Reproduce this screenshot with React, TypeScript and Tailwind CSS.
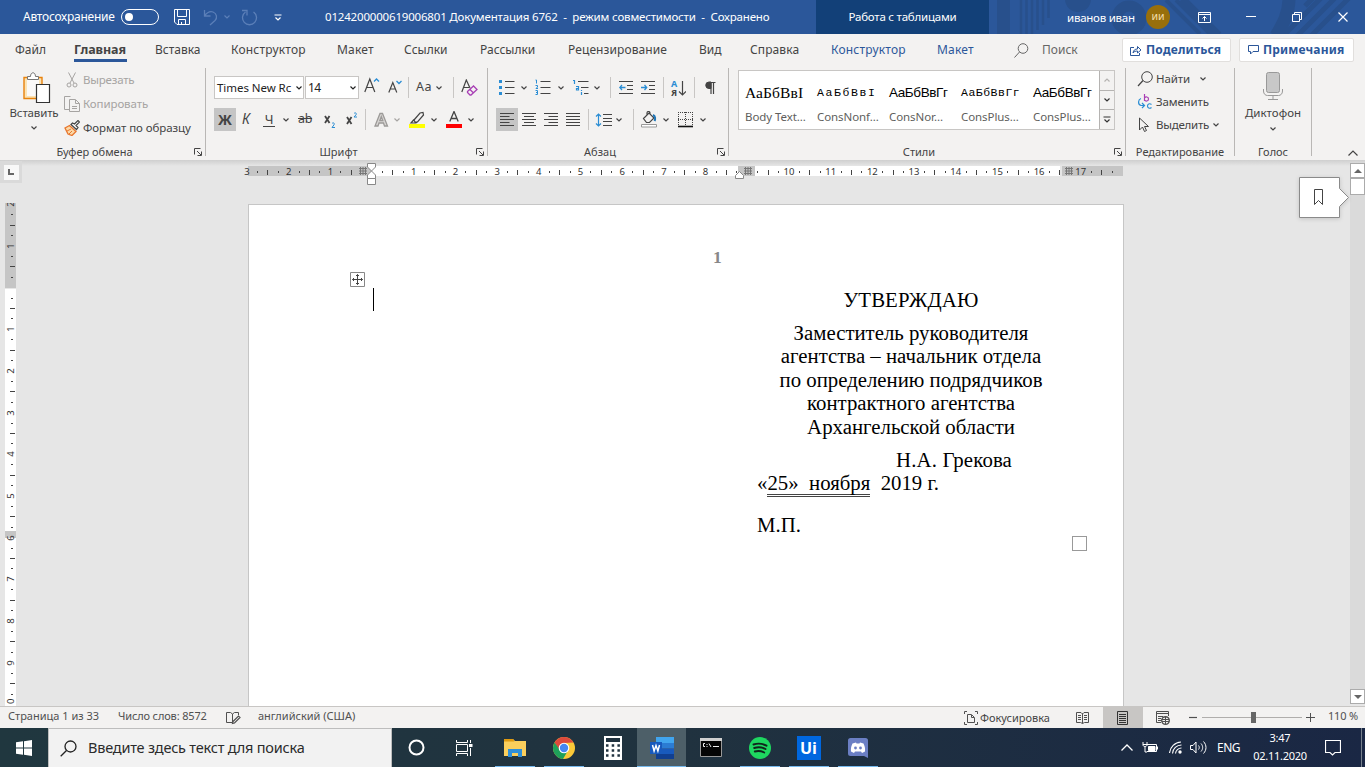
import type { ReactNode } from 'react';

type SvgProps = { w: number; h: number; className?: string; children: ReactNode };

function Svg({ w, h, className = '', children }: SvgProps) {
  return (
    <svg
      width={w}
      height={h}
      viewBox={`0 0 ${w} ${h}`}
      fill="none"
      stroke="currentColor"
      strokeWidth={1}
      className={`block shrink-0 ${className}`}
    >
      {children}
    </svg>
  );
}

function Chevron({ className = '' }: { className?: string }) {
  return (
    <Svg w={6} h={4} className={className}>
      <path d="M.5.5 3 3 5.5.5" strokeWidth={1.2} />
    </Svg>
  );
}

function Sep({ className = '' }: { className?: string }) {
  return <div className={`h-[21px] w-px shrink-0 bg-[#c8c6c4] ${className}`} />;
}

function Launcher({ className = '' }: { className?: string }) {
  return (
    <Svg w={8} h={8} className={className}>
      <path d="M.5 6.5v-6h6M3 3l4 4M7.500 3.500v4h-4" />
    </Svg>
  );
}

function Lines({ rows }: { rows: [number, number][] }) {
  return (
    <Svg w={14} h={14}>
      {rows.map(([a, b], i) => (
        <path key={i} d={`M${a} ${i * 3 + 0.5}H${b}`} />
      ))}
    </Svg>
  );
}

function Label({ children, className = '' }: { children: ReactNode; className?: string }) {
  return <span className={`block shrink-0 whitespace-nowrap ${className}`}>{children}</span>;
}

function TitleBar() {
  return (
    <header className="relative flex h-[34px] items-center bg-[#2b579a] text-[11.5px] text-white">
      <svg className="absolute right-0 top-0" width="376" height="34" viewBox="0 0 376 34" fill="none" stroke="#28508c">
        <path d="M14.500 0v34" strokeWidth="13" />
        <path d="M32 0v34M37.500 0v34M43 0v34M48.500 0v30M54 0v25M59.500 0v18" strokeWidth="2.500" />
        <circle cx="89" cy="-1" r="13" fill="#28508c" stroke="none" />
        <circle cx="140" cy="18" r="12" strokeWidth="11" />
        <path d="M177 0l34 34M187 0l34 34M197 0l34 34" strokeWidth="4" />
        <path d="M192 0l36 36" strokeWidth="9" />
        <path d="M300-2c0 16-6 26-13 38" strokeWidth="13" />
        <path d="M294 36 334-4M308 36 348-4M322 36 362-4M316 6 328-6" strokeWidth="5" />
      </svg>
      <Label className="ml-[23px] w-[98px] text-[12px] tracking-[-0.25px]">Автосохранение</Label>
      <div className="flex h-[16px] w-[38px] shrink-0 items-center rounded-full border border-white px-[3px]">
        <div className="size-[8px] rounded-full bg-white" />
      </div>
      <Svg w={16} h={16} className="ml-[15px]">
        <path d="M.5.5h15v15H3l-2.500-2.500zM3.500 1v6.500h9V1M4.500 15v-4.500h7V15M7.500 13v2" />
      </Svg>
      <Svg w={16} h={17} className="ml-[13px] text-[#5b7fb8]">
        <path d="M1.500 1v6h6M1.500 7C4 3.500 7 2 10 3c4 1.500 4.500 6 2 8.500L7 16" strokeWidth={1.300} />
      </Svg>
      <Chevron className="ml-[5px] text-[#5b7fb8]" />
      <Svg w={17} h={17} className="ml-[11px] text-[#5b7fb8]">
        <path d="M4.500 3A7 7 0 1 0 12.500 3M1 1.500h5v5" strokeWidth={1.300} />
      </Svg>
      <Svg w={8} h={7} className="ml-[16px]">
        <path d="M.5 1h7M1.500 3.500 4 6l2.500-2.500" strokeWidth={1.200} />
      </Svg>
      <Label className="ml-[43px] w-[491px] whitespace-pre text-[11.500px] tracking-[-0.180px]">
        {'0124200000619006801 Документация 6762  -  режим совместимости  -  Сохранено'}
      </Label>
      <div className="flex h-full w-[173px] shrink-0 items-center justify-center bg-[#124078] tracking-[-0.23px]">Работа с таблицами</div>
      <Label className="relative ml-[78px] mt-[2px] w-[79px] tracking-[-0.25px]">иванов иван</Label>
      <div className="relative flex size-[24px] shrink-0 items-center justify-center rounded-full bg-[#986f0b] text-[10.500px] text-[#f3dfae]">ии</div>
      <Svg w={14} h={11} className="relative ml-[28px]">
        <path d="M.5.5h12v10H.5zM.5 2.500h12M6.500 9V4.500M4.500 6.500l2-2 2 2" />
      </Svg>
      <Svg w={10} h={10} className="relative ml-[34px]"><path d="M0 4.500h10" /></Svg>
      <Svg w={10} h={10} className="relative ml-[36px]"><path d="M.5 2.500h7v7h-7zM2.500 2V.5h7v7H8" /></Svg>
      <Svg w={10} h={10} className="relative ml-[36px]"><path d="m.5.5 9 9m0-9-9 9" strokeWidth={1.200} /></Svg>
    </header>
  );
}

function Tabs() {
  return (
    <nav className="flex h-[32px] items-center text-[12px] text-[#444]">
      <Label className="ml-[15px] w-[59px]">Файл</Label>
      <Label className="w-[53px] border-b-[3px] border-[#2b579a] pt-[3px] text-[12.500px] font-bold leading-[18px] tracking-[-0.1px]">Главная</Label>
      <Label className="ml-[28px] w-[76px]">Вставка</Label>
      <Label className="w-[106px] tracking-[0.2px]">Конструктор</Label>
      <Label className="w-[67px] tracking-[0.2px]">Макет</Label>
      <Label className="w-[76px]">Ссылки</Label>
      <Label className="w-[88px]">Рассылки</Label>
      <Label className="w-[131px] tracking-[0.1px]">Рецензирование</Label>
      <Label className="w-[51px]">Вид</Label>
      <Label className="w-[81px] tracking-[0.1px]">Справка</Label>
      <Label className="w-[106px] tracking-[0.2px] text-[#2b579a]">Конструктор</Label>
      <Label className="w-[77px] tracking-[0.2px] text-[#2b579a]">Макет</Label>
      <Svg w={15} h={15} className="text-[#666]"><circle cx="9" cy="5.500" r="4.800" /><path d="M5.500 9 .5 14.500" /></Svg>
      <Label className="ml-[13px] w-[80px] text-[#666]">Поиск</Label>
      <button className="flex h-[24px] w-[109px] shrink-0 items-center whitespace-nowrap rounded-[2px] border border-[#e1dfdd] bg-white pl-[7px] font-bold text-[#2b579a]">
        <Svg w={12} h={11}><path d="M4 2.500H.5v8h9V8M3 8c.5-3 2-4 4.500-4V1.500L11 5 7.500 8V6C5.500 6 4 6.500 3 8z" /></Svg>
        <span className="ml-[4px] tracking-[0.2px]">Поделиться</span>
      </button>
      <button className="ml-[8px] flex h-[24px] w-[115px] shrink-0 items-center whitespace-nowrap rounded-[2px] border border-[#e1dfdd] bg-white pl-[8px] font-bold text-[#2b579a]">
        <Svg w={11} h={10}><path d="M.5.5h10v6H5L2.500 9V6.500h-2z" /></Svg>
        <span className="ml-[4px] tracking-[0.15px]">Примечания</span>
      </button>
    </nav>
  );
}

function Group({ width, caption, launcher, children }: { width: string; caption: string; launcher?: boolean; children: ReactNode }) {
  return (
    <section className={`flex h-[88px] shrink-0 flex-col border-r border-[#b9b7b5] ${width}`}>
      <div className="h-[78px] shrink-0">{children}</div>
      <div className="flex h-[12px] shrink-0 items-center text-[11px] leading-[12px] text-[#444]">
        <span className={`flex-1 whitespace-nowrap text-center ${launcher ? 'pr-[5px]' : ''}`}>{caption}</span>
        {launcher && <Launcher className="mr-[3px]" />}
      </div>
    </section>
  );
}

function Clipboard() {
  return (
    <Group width="w-[206px]" caption="Буфер обмена" launcher>
      <div className="flex">
        <div className="flex w-[64px] flex-col items-center pl-[4px] pt-[4px]">
          <Svg w={29} h={32} className="mr-[-4px]">
            <path d="M2 5.500h18v21H2z" fill="#fbe3b4" stroke="#e8820c" strokeWidth={1.400} />
            <path d="M5 7h12v17H5z" fill="#faf9f8" stroke="none" />
            <path d="M5.500 7.500V4.500h3c0-5 5-5 5 0h3v3z" fill="#fff" stroke="#777" />
            <path d="M14.500 12.500h13v18h-13z" fill="#fff" stroke="#333" strokeWidth={1.200} />
          </Svg>
          <Label className="mt-px text-[11.500px] leading-[15px] tracking-[-0.15px]">Вставить</Label>
          <Chevron className="mt-[6px]" />
        </div>
        <div className="flex flex-col text-[11.500px]">
          <div className="flex h-[24px] items-center text-[#a6a4a2]">
            <Svg w={16} h={16}><path d="M4.500.5 10 11M11.500.5 6 11" /><circle cx="5" cy="13" r="2" /><circle cx="11" cy="13" r="2" /></Svg>
            <Label className="ml-[3px] tracking-[-0.2px]">Вырезать</Label>
          </div>
          <div className="flex h-[24px] items-center text-[#a6a4a2]">
            <Svg w={16} h={16}><path d="M5 13.500H.5V.5h6M5.500 3.500h6l4 4v8h-10zM11.500 4v3.500h4M8 10.500h5M8 12.500h5" /></Svg>
            <Label className="ml-[3px] tracking-[-0.1px]">Копировать</Label>
          </div>
          <div className="flex h-[24px] items-center text-[#444]">
            <Svg w={16} h={16}>
              <path d="M5.500 5.500 1 8l3 6 4 1.500 4-4z" fill="#fbd9a8" stroke="#e8762d" strokeWidth={1.300} />
              <path d="M3 11l4-2M5 14l3-3" stroke="#e8762d" />
              <path d="m7 4.500 5.500 5 1.500-2-2-2L15.500 2 14 .5 10.500 4l-2-1z" fill="#fff" strokeWidth={1.200} />
            </Svg>
            <Label className="ml-[3px] tracking-[-0.07px]">Формат по образцу</Label>
          </div>
        </div>
      </div>
    </Group>
  );
}

function FontGroup() {
  return (
    <Group width="w-[282px]" caption="Шрифт" launcher>
      <div className="pl-[8px] pt-[8px]">
        <div className="flex h-[23px] items-center">
          <div className="flex h-[23px] w-[90px] shrink-0 items-center border border-[#c8c6c4] bg-white pl-[2px] text-[11.500px] text-[#222]">
            <span className="w-[74px] whitespace-nowrap tracking-[-0.05px]">Times New Rc</span>
            <Chevron className="ml-[5px]" />
          </div>
          <div className="ml-px flex h-[23px] w-[54px] shrink-0 items-center border border-[#c8c6c4] bg-white pl-[2px] text-[12px] text-[#222]">
            <span className="w-[42px] tracking-[-0.5px]">14</span>
            <Chevron />
          </div>
          <Svg w={16} h={16} className="mb-[5px] ml-[5px]">
            <path d="m.8 15 5-13 5 13M2.500 10.500h6.500" strokeWidth={1.200} />
            <path d="m10 4.500 2.500-2.500L15 4.500" stroke="#2a8dd4" strokeWidth={1.300} />
          </Svg>
          <Svg w={14} h={14} className="mb-[2px] ml-[8px]">
            <path d="m.8 12.500 4-10 4 10M2.200 9h5.200" strokeWidth={1.200} />
            <path d="m8.500 1 2.500 2.500L13.500 1" stroke="#2a8dd4" strokeWidth={1.300} />
          </Svg>
          <Sep className="ml-[6px]" />
          <Label className="ml-[7px] w-[18px] text-[12.500px] tracking-[0.5px]">Aa</Label>
          <Chevron className="ml-[2px]" />
          <Sep className="ml-[11px]" />
          <Svg w={17} h={17} className="ml-[7px]">
            <path d="m.8 13 4.500-12L9 9M2.500 8.500h5.500" strokeWidth={1.200} />
            <path d="m6.500 12.500 6-5.500 3.500 3.500-6 5.500H9l-2.500-2.500zM9 10.500l3.500 3.500" stroke="#a83fb5" strokeWidth={1.300} />
          </Svg>
        </div>
        <div className="mt-[9px] flex h-[23px] items-center">
          <div className="flex h-[23px] w-[22px] shrink-0 items-center justify-center bg-[#c5c5c5] pb-px text-[14px] font-bold">Ж</div>
          <Label className="mb-[2px] ml-[6px] w-[10px] text-[14px] italic">К</Label>
          <Label className="ml-[11px] w-[12px] border-b border-[#444] text-center text-[13px] leading-[13px]">Ч</Label>
          <Chevron className="ml-[8px]" />
          <Label className="ml-[9px] w-[16px] text-[12.500px] tracking-[-0.300px] line-through">ab</Label>
          <Svg w={12} h={16} className="ml-[10px]">
            <path d="m1 4 4.500 7M5.500 4 1 11" strokeWidth={1.800} />
            <path d="M8 11.500c1.500-1.500 3 0 2 1.300L8 15.500h3" stroke="#2a8dd4" />
          </Svg>
          <Svg w={12} h={16} className="ml-[10px]">
            <path d="m1 5 4.500 7M5.500 5 1 12" strokeWidth={1.800} />
            <path d="M8 1.500c1.500-1.500 3 0 2 1.300L8 5h3" stroke="#2a8dd4" />
          </Svg>
          <Sep className="ml-[7px]" />
          <Svg w={16} h={16} className="ml-[8px] text-[#9c9a98]">
            <path d="M6 1.500h2.500L13.500 14H10.500L9.500 11H5L4 14H1zM5.800 8.500h3L7.300 4.500z" fill="#d8d6d4" strokeWidth={1.300} />
          </Svg>
          <Chevron className="ml-[4px] text-[#a6a4a2]" />
          <Svg w={16} h={17} className="ml-[9px]">
            <path d="m5 9 6-7 3-.5.5 2.500-6 7H6zM5 8.500l-3 3.500h5l1-1" strokeWidth={1.200} />
            <path d="M0 15h16" stroke="#ff0" strokeWidth={4} />
          </Svg>
          <Chevron className="ml-[6px]" />
          <Svg w={16} h={17} className="ml-[9px]">
            <path d="M3.800 10.500 8 .5l4.200 10M5.200 7.500h5.600" strokeWidth={1.300} />
            <path d="M0 15h16" stroke="#f00" strokeWidth={4} />
          </Svg>
          <Chevron className="ml-[6px]" />
        </div>
      </div>
    </Group>
  );
}

function Paragraph() {
  return (
    <Group width="w-[241px]" caption="Абзац" launcher>
      <div className="pl-[8px] pt-[8px]">
        <div className="flex h-[23px] items-center">
          <Svg w={16} h={16} className="ml-[3px]">
            <path d="M0 1.500h3M0 7.500h3M0 13.500h3" stroke="#2a8dd4" strokeWidth={3} />
            <path d="M6 1.500h9.500M6 7.500h9.500M6 13.500h9.500" />
          </Svg>
          <Chevron className="ml-[6px]" />
          <Svg w={16} h={17} className="ml-[8px]">
            <path d="M.5 1h1v3.500M.5 6.500h2V8L1 9.500h2M.5 11.500h2v4h-2M1 13.500h1" stroke="#2a8dd4" />
            <path d="M5.500 2.500h10M5.500 8.500h10M5.500 14.500h10" />
          </Svg>
          <Chevron className="ml-[7px]" />
          <Svg w={16} h={17} className="ml-[9px]">
            <path d="M0 1.500h1.500V5M3 7.500h2.500V11H3.500V9.500h2M8.500 13v3M8.500 11v1" stroke="#2a8dd4" strokeWidth={1.200} />
            <path d="M5 2.500h10.500M8 8.500h7.500M11 14.500h4.500" />
          </Svg>
          <Chevron className="ml-[5px]" />
          <Sep className="ml-[10px]" />
          <Svg w={14} h={14} className="ml-[8px]">
            <path d="M0 .5h14M8 4.500h6M8 8.500h6M0 12.500h14" />
            <path d="M6.500 6.500H1M3 4 .8 6.500 3 9" stroke="#2a8dd4" strokeWidth={1.300} />
          </Svg>
          <Svg w={14} h={14} className="ml-[8px]">
            <path d="M0 .5h14M8 4.500h6M8 8.500h6M0 12.500h14" />
            <path d="M0 6.500h5.500M3.500 4l2.200 2.500L3.500 9" stroke="#2a8dd4" strokeWidth={1.300} />
          </Svg>
          <Sep className="ml-[8px]" />
          <div className="ml-[7px] flex w-[16px] shrink-0 items-center">
            <div className="flex flex-col text-[9px] font-bold leading-[9px]">
              <span className="block h-[9px] text-[#2a8dd4]">А</span>
              <span className="block h-[9px]">Я</span>
            </div>
            <Svg w={8} h={16} className="ml-px"><path d="M4.500 1v14M1 11.500 4.500 15 8 11.500" strokeWidth={1.200} /></Svg>
          </div>
          <Sep className="ml-[7px]" />
          <Svg w={11} h={14} className="ml-[10px]">
            <path d="M8.500 13V1M6 13V1M10.500 1.500H4" strokeWidth={1.200} />
            <path d="M6 1H4a3 3 0 0 0 0 6.500h2z" fill="currentColor" />
          </Svg>
        </div>
        <div className="mt-[9px] flex h-[23px] items-center">
          <div className="flex h-[23px] w-[22px] shrink-0 items-center justify-center bg-[#c5c5c5]">
            <Lines rows={[[0, 14], [0, 9.500], [0, 14], [0, 9.500], [0, 14]]} />
          </div>
          <div className="ml-[4px]"><Lines rows={[[0, 14], [2, 12], [0, 14], [2, 12], [0, 14]]} /></div>
          <div className="ml-[8px]"><Lines rows={[[0, 14], [4.500, 14], [0, 14], [4.500, 14], [0, 14]]} /></div>
          <div className="ml-[8px]"><Lines rows={[[0, 14], [0, 14], [0, 14], [0, 14], [0, 14]]} /></div>
          <Sep className="ml-[8px]" />
          <Svg w={17} h={14} className="ml-[6px]">
            <path d="M3.500 1v12M1 3.500 3.500 1 6 3.500M1 10.500 3.500 13 6 10.500" stroke="#2a8dd4" strokeWidth={1.200} />
            <path d="M8 1.500h9M8 5.500h9M8 8.500h9M8 12.500h9" />
          </Svg>
          <Chevron className="ml-[4px]" />
          <Sep className="ml-[11px]" />
          <Svg w={16} h={17} className="ml-[7px]">
            <path d="m2.500 7.500 5.500-5.500 5 5-4.500 4.500H5.500zM6 4V2c0-2 3-2 3 0v2" strokeWidth={1.200} />
            <path d="M12 4c2.500 1 2.500 4 1.500 6" stroke="#1f77b8" strokeWidth={2} />
            <path d="M.5 13.500h15v2.500H.5z" fill="#fff" stroke="#999" />
          </Svg>
          <Chevron className="ml-[6px]" />
          <Svg w={16} h={16} className="ml-[9px]">
            <path d="M.5 0v14M14.500 0v14M7.500 0v14M0 .5h15M0 7.500h15" strokeDasharray="1 1" />
            <path d="M0 14.500h15" strokeWidth={1.600} stroke="#111" />
          </Svg>
          <Chevron className="ml-[6px]" />
        </div>
      </div>
    </Group>
  );
}

const STYLES = [
  { sample: 'АаБбВвІ', name: 'Body Text...', font: 'font-["Liberation_Serif",serif] text-[15.5px] tracking-[0.1px]' },
  { sample: 'АаБбВвІ', name: 'ConsNonf...', font: 'font-["Liberation_Mono",monospace] text-[11.5px] tracking-[1.6px]' },
  { sample: 'АаБбВвГг', name: 'ConsNor...', font: 'font-["Liberation_Sans",sans-serif] text-[13.5px] tracking-[-0.4px]' },
  { sample: 'АаБбВвГг', name: 'ConsPlus...', font: 'font-["Liberation_Mono",monospace] text-[11.5px] tracking-[0.5px]' },
  { sample: 'АаБбВвГг', name: 'ConsPlus...', font: 'font-["Liberation_Sans",sans-serif] text-[13.5px] tracking-[-0.4px]' },
];

function Styles() {
  return (
    <Group width="w-[397px]" caption="Стили" launcher>
      <div className="pl-[9px] pt-[2px]">
        <div className="flex h-[60px] w-[377px] border border-[#c8c6c4] bg-white">
          {STYLES.map((s, i) => (
            <div key={i} className="w-[72px] shrink-0 pl-[6px] pt-[12px]">
              <span className={`block h-[20px] w-[60px] whitespace-nowrap leading-[20px] text-black ${s.font}`}>{s.sample}</span>
              <span className="mt-[6px] block whitespace-nowrap text-[11.500px] leading-[16px] tracking-[-0.08px] text-[#605e5c]">{s.name}</span>
            </div>
          ))}
          <div className="ml-auto flex w-[15px] shrink-0 flex-col border-l border-[#b5b3b1]">
            <div className="flex flex-1 items-center justify-center bg-[#f3f2f1] text-[#b5b3b1]"><Chevron className="rotate-180" /></div>
            <div className="flex flex-1 items-center justify-center border-y border-[#b5b3b1] bg-[#f3f2f1] text-[#333]"><Chevron /></div>
            <div className="flex flex-1 items-center justify-center bg-[#f3f2f1] text-[#333]">
              <Svg w={8} h={7}><path d="M.5 1h7M1.500 3.500 4 6l2.500-2.500" strokeWidth={1.200} /></Svg>
            </div>
          </div>
        </div>
      </div>
    </Group>
  );
}

function Editing() {
  return (
    <Group width="w-[109px]" caption="Редактирование">
      <div className="flex flex-col pl-[11px] text-[11.500px]">
        <div className="flex h-[22px] items-center">
          <Svg w={16} h={16}><circle cx="10" cy="6" r="5.300" /><path d="m6 9.500-5 5.500" strokeWidth={1.200} /></Svg>
          <Label className="ml-[3px] w-[44px] tracking-[-0.1px]">Найти</Label>
          <Chevron />
        </div>
        <div className="flex h-[24px] items-center">
          <Svg w={16} h={16}>
            <path d="M7.500 0v7M7.500 4c1-1.500 4-1.500 4 1s-3 2.500-4 1" stroke="#a83fb5" strokeWidth={1.200} />
            <path d="M14.500 10.500c-2-1.500-4-.5-4 1.500s2 3 4 1.500M4 4.500c-3 1-3.500 6 0 7h3M5 9l2.500 2.500L5 14" stroke="#2a8dd4" strokeWidth={1.200} />
          </Svg>
          <Label className="ml-[3px] tracking-[-0.15px]">Заменить</Label>
        </div>
        <div className="flex h-[22px] items-center">
          <Svg w={16} h={16}><path d="M2.500 1v12l3-3 2 4.500 2-1L7.500 9.500h4z" /></Svg>
          <Label className="ml-[3px] w-[57px] tracking-[-0.25px]">Выделить</Label>
          <Chevron />
        </div>
      </div>
    </Group>
  );
}

function Ribbon() {
  return (
    <div className="flex h-[94px] pt-[2px] text-[#444]">
      <Clipboard />
      <FontGroup />
      <Paragraph />
      <Styles />
      <Editing />
      <Group width="w-[77px]" caption="Голос">
        <div className="flex flex-col items-center pt-[4px]">
          <Svg w={20} h={29}>
            <path d="M3.500 2.500a2 2 0 0 1 2-2h9a2 2 0 0 1 2 2v16a2 2 0 0 1-2 2h-9a2 2 0 0 1-2-2z" fill="#c8c8c8" stroke="#999" />
            <path d="M.5 17v2c0 3 2 4.500 4 4.500h11c2 0 4-1.500 4-4.500v-2M10 24v3.500M5 27.500h10" stroke="#999" />
          </Svg>
          <Label className="mt-[4px] text-[11.500px] leading-[15px]">Диктофон</Label>
          <Chevron className="mt-[7px]" />
        </div>
      </Group>
      <Svg w={10} h={6} className="ml-[36px] mt-[82px]"><path d="M.5 5.500 5 1l4.500 4.500" strokeWidth={1.200} /></Svg>
    </div>
  );
}

/* Each unit is drawn as four slots: number, dot, tick, dot. */
function slotMark(k: number) {
  const phase = ((k % 4) + 4) % 4;
  if (phase === 0) return 'number';
  return phase === 2 ? 'tick' : 'dot';
}

const H_SLOTS = Array.from({ length: 84 }, (_, i) => i - 12);
const V_SLOTS = Array.from({ length: 49 }, (_, i) => i - 8);

function GridMark({ className = '' }: { className?: string }) {
  return (
    <Svg w={8} h={8} className={`text-[#777] ${className}`}>
      <path d="M1.500 0v8M4 0v8M6.500 0v8M0 1.500h8M0 4h8M0 6.500h8" />
    </Svg>
  );
}

function HorizontalRuler() {
  return (
    <div className="relative mt-[6px] h-[10px] w-[875px]">
      <div className="flex h-full">
        <div className="w-[123px] bg-[#c5c5c5]" />
        <div className="w-[367px] bg-white" />
        <div className="w-[17px] bg-[#c5c5c5]" />
        <div className="w-[305px] bg-white" />
        <div className="ml-[2px] flex-1 bg-[#c5c5c5]" />
      </div>
      <div className="absolute left-[-6.200px] top-0 flex h-[11px] items-center text-[9.500px] leading-[11px] text-[#333]">
        {H_SLOTS.map((k) => {
          const m = slotMark(k);
          const hidden = k === 0 || k === 36 || k === -1 || k === 67 || k > 71;
          return (
            <span key={k} className="flex w-[10.425px] shrink-0 items-center justify-center">
              {hidden ? null : m === 'number' ? Math.abs(k / 4) : <i className={m === 'tick' ? 'mt-px h-[5px] w-px bg-[#444]' : 'mt-px h-[2px] w-px bg-[#444]'} />}
            </span>
          );
        })}
      </div>
      <GridMark className="absolute left-[111px] top-[1px]" />
      <GridMark className="absolute left-[496px] top-[1px]" />
      <GridMark className="absolute left-[817px] top-[1px]" />
      <Svg w={9} h={22} className="absolute left-[119px] top-[-3px] text-[#888]">
        <path d="M.5.5h8v3.500l-4 4 4 4v3.500h-8V12l4-4-4-4zM.5 15.500h8v6h-8z" fill="#fff" />
      </Svg>
      <Svg w={9} h={8} className="absolute left-[487px] top-[5px] text-[#888]">
        <path d="M.5 7.500V4.500l4-4 4 4v3z" fill="#fff" />
      </Svg>
    </div>
  );
}

function VerticalRuler() {
  return (
    <div className="relative ml-[5px] mt-[20px] h-[503px] w-[11px] overflow-hidden bg-white">
      <div className="h-[86px] border-b border-[#e6e6e6] bg-[#c5c5c5]" />
      <div className="absolute left-0 top-[328px] h-[7px] w-[11px] bg-[#c5c5c5]" />
      <div className="absolute left-[-1px] top-[-4px] flex w-[14px] flex-col items-center text-[9.500px] leading-[10px] text-[#333]">
        {V_SLOTS.map((k) => {
          const m = slotMark(k);
          return (
            <span key={k} className="flex h-[10.425px] w-[14px] shrink-0 items-center justify-center">
              {k === 0 ? null : m === 'number' ? (
                <b className="-rotate-90 font-normal">{Math.abs(k / 4)}</b>
              ) : (
                <i className={m === 'tick' ? 'ml-[3px] h-px w-[5px] bg-[#444]' : 'ml-[2px] h-px w-[2px] bg-[#444]'} />
              )}
            </span>
          );
        })}
      </div>
    </div>
  );
}

function Page() {
  return (
    <article className='relative mt-[28px] h-[502px] w-[876px] border border-b-0 border-[#c6c6c6] bg-white font-["Liberation_Serif",serif] text-[20.800px] leading-[23.600px] text-black'>
      <div className="ml-[464px] mt-[41px] text-[17.500px] font-bold text-[#888]">1</div>
      <div className="ml-[508px] mt-[18px] w-[308px]">
        <p className="text-center tracking-[0.1px]">УТВЕРЖДАЮ</p>
        <p className="mt-[9.500px] text-center">
          Заместитель руководителя<br />агентства – начальник отдела<br />по определению подрядчиков<br />контрактного агентства<br />Архангельской области
        </p>
        <p className="mt-[9px] pl-[139px] tracking-[0.15px]">Н.А. Грекова</p>
        <p className="whitespace-pre">
          «<span className="border-b-[3px] border-double border-[#444]">{'25»  ноября'}</span>{'  2019 г.'}
        </p>
        <p className="mt-[18px]">М.П.</p>
      </div>
      <Svg w={15} h={15} className="absolute left-[101px] top-[67px] text-[#888]">
        <path d="M.5.5h14v14H.5z" fill="#fff" />
        <path d="M7.500 2.500v10M2.500 7.500h10M6 4l1.500-1.500L9 4M6 11l1.500 1.500L9 11M4 6 2.500 7.500 4 9M11 6l1.500 1.500L11 9" stroke="#444" />
      </Svg>
      <div className="absolute left-[124px] top-[83px] h-[23px] w-px bg-black" />
      <div className="absolute left-[823px] top-[331px] size-[15px] border border-[#999] bg-white" />
    </article>
  );
}

function Workspace() {
  return (
    <main className="relative flex h-[546px] overflow-hidden bg-[#e6e6e6]">
      <div className="absolute inset-x-0 top-0 h-[6px] bg-linear-to-b from-[#cfcfcf] to-[#e6e6e6]" />
      <div className="relative w-[248px] shrink-0 pt-px">
        <div className="flex size-[22px] items-center justify-center bg-[#dadada]">
          <div className="flex size-[15px] items-center justify-center bg-[#f8f8f8]">
            <Svg w={6} h={6} className="text-[#666]"><path d="M1 0v5h5" strokeWidth={2} /></Svg>
          </div>
        </div>
        <VerticalRuler />
      </div>
      <div className="relative w-[876px] shrink-0">
        <HorizontalRuler />
        <Page />
      </div>
      <div className="relative flex flex-1 justify-between">
        <Svg w={52} h={46} className="ml-[174px] mt-[16px] drop-shadow-sm">
          <path d="M1.500 1.500h40v11l9 9-9 9v11h-40z" fill="#fff" stroke="#8a8a8a" />
          <path d="M16.500 13.500h8v15l-4-4-4 4z" stroke="#444" />
        </Svg>
        <div className="mt-[3px] flex h-[541px] w-[15px] flex-col bg-[#dadada]">
          <div className="flex h-[15px] items-center justify-center border border-[#ababab] bg-white">
            <Svg w={8} h={4}><path d="M0 4 4 0l4 4z" fill="#666" stroke="none" /></Svg>
          </div>
          <div className="h-[17px] border border-[#ababab] bg-white" />
          <div className="mt-auto flex h-[15px] items-center justify-center border border-[#ababab] bg-white">
            <Svg w={8} h={4}><path d="M0 0l4 4 4-4z" fill="#666" stroke="none" /></Svg>
          </div>
        </div>
      </div>
    </main>
  );
}

function StatusBar() {
  return (
    <footer className="flex h-[22px] items-center border-t border-[#c8c6c4] bg-[#f3f2f1] text-[11px] leading-[14px] text-[#505050]">
      <Label className="mb-[3px] ml-[8px] w-[110px]">Страница 1 из 33</Label>
      <Label className="mb-[3px] w-[108px] tracking-[-0.15px]">Число слов: 8572</Label>
      <Svg w={15} h={14}>
        <path d="M6.500 11.500H.5v-10h4l2 1.500 2-1.500h4V4M6.500 3v8" />
        <path d="m7 10.500 5.500-5.500 1.500 1.500-5.500 5.500-2 .5z" strokeWidth={1.200} />
      </Svg>
      <Label className="mb-[3px] ml-[17px]">английский (США)</Label>
      <Svg w={14} h={14} className="ml-auto">
        <path d="M3 .5H.5V3M11 .5h2.500V3M3 13.500H.5V11M11 13.500h2.500V11M3.500 3.500h4l3 3v5h-7zM7.500 4v2.500H10" />
      </Svg>
      <Label className="ml-[2px] w-[96px] tracking-[-0.02px] text-[#444]">Фокусировка</Label>
      <Svg w={13} h={12}>
        <path d="M6.500 1.500v10M.5.5H5L6.500 2 8 .5h4.500v10h-4l-2 1-2-1h-4zM2 3.500h3M2 5.500h3M2 7.500h3M8 3.500h3M8 5.500h3M8 7.500h3" />
      </Svg>
      <div className="ml-[14px] flex h-full w-[40px] shrink-0 items-center justify-center bg-[#c8c6c4] text-[#333]">
        <Svg w={11} h={14} className="mr-px"><path d="M.5.5h10v13H.5zM2 3.500h7M2 5.500h7M2 7.500h7M2 9.500h7M2 11.500h7" /></Svg>
      </div>
      <Svg w={14} h={14} className="ml-[13px]">
        <path d="M5 11.500H.5V.5h12V5M.5 2.500h12M2 5.500h5M2 7.500h3M2 9.500h3" />
        <circle cx="9.500" cy="9.500" r="3.800" strokeWidth={1.400} /><path d="M6 8.500h7M6 10.500h7M9.500 6v7" />
      </Svg>
      <Svg w={9} h={9} className="ml-[19px]"><path d="M0 4.500h8" strokeWidth={1.200} /></Svg>
      <div className="ml-[4px] flex h-[11px] w-[100px] shrink-0 items-center">
        <div className="h-px w-[49px] bg-[#b0aeac]" />
        <div className="h-[11px] w-[5px] bg-[#666]" />
        <div className="h-px flex-1 bg-[#b0aeac]" />
      </div>
      <Svg w={9} h={9} className="ml-[4px]"><path d="M0 4.500h9M4.500 0v9" /></Svg>
      <Label className="mb-[3px] ml-[13px] w-[37px] tracking-[-0.200px]">110 %</Label>
    </footer>
  );
}

function AppButton({ children, open, active }: { children: ReactNode; open?: boolean; active?: boolean }) {
  return (
    <div className={`flex h-full w-[49px] shrink-0 flex-col items-center ${active ? 'bg-[#4d5f68]' : ''}`}>
      <div className="flex h-[38px] items-center justify-center pt-px">{children}</div>
      {(open || active) && <div className={`h-px bg-[#76b9ed] ${active ? 'w-full' : 'w-[40px]'}`} />}
    </div>
  );
}

function Taskbar() {
  return (
    <div className="flex h-[39px] items-center bg-linear-to-r from-[#20373f] via-[#20323f] to-[#1a2744] text-white">
      <div className="flex w-[48px] shrink-0 justify-center">
        <Svg w={16} h={16}><path d="M0 2.300 7 1.300v6.200H0zM8 1.200 16 0v7.500H8zM0 8.500h7v6.200l-7-1zM8 8.500h8V16l-8-1.200z" fill="#fff" stroke="none" /></Svg>
      </div>
      <div className="flex h-full w-[344px] shrink-0 items-center border border-b-0 border-[#bdbdbd] bg-[#f2f2f2] text-[#222]">
        <Svg w={17} h={17} className="ml-[11px]"><circle cx="10.500" cy="6.500" r="5.500" strokeWidth={1.300} /><path d="M6.500 10.500.7 16.300" strokeWidth={1.300} /></Svg>
        <Label className="ml-[11px] text-[14.500px] tracking-[-0.21px] text-[#2b2b2b]">Введите здесь текст для поиска</Label>
      </div>
      <div className="flex w-[48px] shrink-0 justify-center"><Svg w={17} h={17}><circle cx="8.500" cy="8.500" r="7" strokeWidth={2} /></Svg></div>
      <div className="flex w-[48px] shrink-0 justify-center">
        <Svg w={17} h={16}><path d="M.5 0v2.500h11V0M.5 16v-2.500h11V16M.5 4.500h11v7H.5zM14.500 0v3M14.500 8v8" /><path d="M13 4h3.500v3H13z" fill="#fff" stroke="none" /></Svg>
      </div>
      <div className="ml-[2px] flex h-full">
        <AppButton open>
          <Svg w={22} h={18}>
            <g stroke="none">
              <path d="M0 0h9l2 2h11v15H0z" fill="#fbcf5c" /><path d="M0 0h9l1.500 2.500H0z" fill="#e09a10" />
              <path d="M4 10h14v8h-4v-4H8v4H4z" fill="#2f8fd8" />
            </g>
          </Svg>
        </AppButton>
        <AppButton open>
          <Svg w={22} h={22}>
            <g stroke="none">
              <circle cx="11" cy="11" r="11" fill="#fbc938" />
              <path d="M1.500 5.500A11 11 0 0 1 20.500 5.500L11 6 6 13.500z" fill="#dd4a3c" />
              <path d="M1.500 5.500A11 11 0 0 0 10 22l5-8.500-8-.5z" fill="#1ea05a" />
              <circle cx="11" cy="11" r="5.300" fill="#fff" /><circle cx="11" cy="11" r="4.200" fill="#4687f1" />
            </g>
          </Svg>
        </AppButton>
        <AppButton>
          <Svg w={18} h={24}>
            <path d="M0 0h18v24H0z" fill="#fff" stroke="none" />
            <path d="M2 4h14" strokeWidth={4} stroke="#20323f" />
            <path d="M2 9.500h14M2 14.500h14M2 19.500h14" stroke="#20323f" strokeWidth={2.500} strokeDasharray="2.500 3.200" />
          </Svg>
        </AppButton>
        <AppButton active>
          <Svg w={24} h={22}>
            <g stroke="none">
              <path d="M6 0h18v6H6z" fill="#41a5ee" /><path d="M6 6h18v5.500H6z" fill="#2b7cd3" />
              <path d="M6 11.500h18V17H6z" fill="#185abd" /><path d="M6 17h18v5H6z" fill="#103f91" />
              <path d="M0 5h12v12H0z" fill="#185abd" />
            </g>
            <path d="m2.500 8 1.600 6L6 8.500 7.900 14 9.500 8" stroke="#fff" strokeWidth={1.500} />
          </Svg>
        </AppButton>
        <AppButton>
          <Svg w={22} h={19}>
            <path d="M.5.5h21v18H.5z" fill="#050505" stroke="#999" /><path d="M0 1.500h22" stroke="#d0d0d0" strokeWidth={3} />
            <path d="M5 5.500H3.500v3H5M7 6v1M7 8v1M9 5.500l2 3.500M13 8.500h6" stroke="#eee" />
          </Svg>
        </AppButton>
        <AppButton open>
          <Svg w={22} h={22}>
            <circle cx="11" cy="11" r="11" fill="#1ed760" stroke="none" />
            <path d="M4.500 7.500c4.500-1.500 9-1 13 1.200M5.200 11c4-1.200 8-.8 11.300 1M5.800 14.500c3.500-1 6.500-.5 9.400 1" stroke="#10241c" strokeWidth={1.900} strokeLinecap="round" />
          </Svg>
        </AppButton>
        <AppButton open>
          <div className='flex size-[24px] items-center justify-center bg-[#0067df] font-["Open_Sans",sans-serif] text-[16px] font-bold'>Ui</div>
        </AppButton>
        <AppButton open>
          <Svg w={20} h={20}>
            <path d="M2.500 0h15A2.500 2.500 0 0 1 20 2.500V20l-4-2H2.500A2.500 2.500 0 0 1 0 15.500v-13A2.500 2.500 0 0 1 2.500 0z" fill="#6b7fc4" stroke="none" />
            <path d="M4.500 5.500 8 4.500l.5 1h3l.5-1 3.500 1c1.300 2.500 1.800 5 1.500 8L14 15l-1-1.500H7L6 15l-3-1.500c-.3-3 .2-5.500 1.500-8z" fill="#fff" stroke="none" />
            <circle cx="7.500" cy="10" r="1.400" fill="#6b7fc4" stroke="none" /><circle cx="12.500" cy="10" r="1.400" fill="#6b7fc4" stroke="none" />
          </Svg>
        </AppButton>
      </div>
      <Svg w={12} h={7} className="ml-auto"><path d="m.5 6.500 5.500-5.500 5.500 5.500" strokeWidth={1.300} /></Svg>
      <Svg w={16} h={12} className="ml-[9px]">
        <path d="M5 2.500h9.500v7H5M1 0v3c0 2 4 2 4 0V0M1 2.500h4M3 4v6h2M15.500 4.500v3" /><path d="M6.500 4.500H13v4H6.500z" fill="#fff" />
      </Svg>
      <Svg w={13} h={13} className="ml-[11px]">
        <path d="M.5 12A12 12 0 0 1 12 1M3.500 12.500A9 9 0 0 1 12.500 4M6.500 12.500a6 6 0 0 1 6-5.500" strokeWidth={1.100} /><circle cx="11" cy="11" r="1.700" fill="#fff" stroke="none" />
      </Svg>
      <Svg w={17} h={13} className="ml-[8px]">
        <path d="M.5 4.500H3L6 1v11L3 8.500H.5zM8.500 4.500c1 1.300 1 2.700 0 4M11 2.500c2.200 2.500 2.200 5.500 0 8M13.500.5c3.300 3.500 3.300 8.500 0 12" />
      </Svg>
      <Label className="ml-[10px] w-[24px] text-[12px] tracking-[-0.500px]">ENG</Label>
      <div className="mb-px ml-[8px] flex w-[62px] shrink-0 flex-col items-center whitespace-nowrap text-[11px] leading-[18px] tracking-[-0.250px]">
        <span>3:47</span>
        <span>02.11.2020</span>
      </div>
      <Svg w={16} h={16} className="ml-[14px]"><path d="M.5.500h15v12H10l-2.500 2.500L5 12.500H.5z" strokeWidth={1.200} /></Svg>
      <div className="ml-[20px] mr-[3px] h-full w-px shrink-0 bg-[#76808c]" />
    </div>
  );
}

export default function App() {
  return (
    <div className='h-[767px] w-[1365px] overflow-hidden bg-[#f3f2f1] font-["Noto_Sans",sans-serif]'>
      <TitleBar />
      <Tabs />
      <Ribbon />
      <Workspace />
      <StatusBar />
      <Taskbar />
    </div>
  );
}
